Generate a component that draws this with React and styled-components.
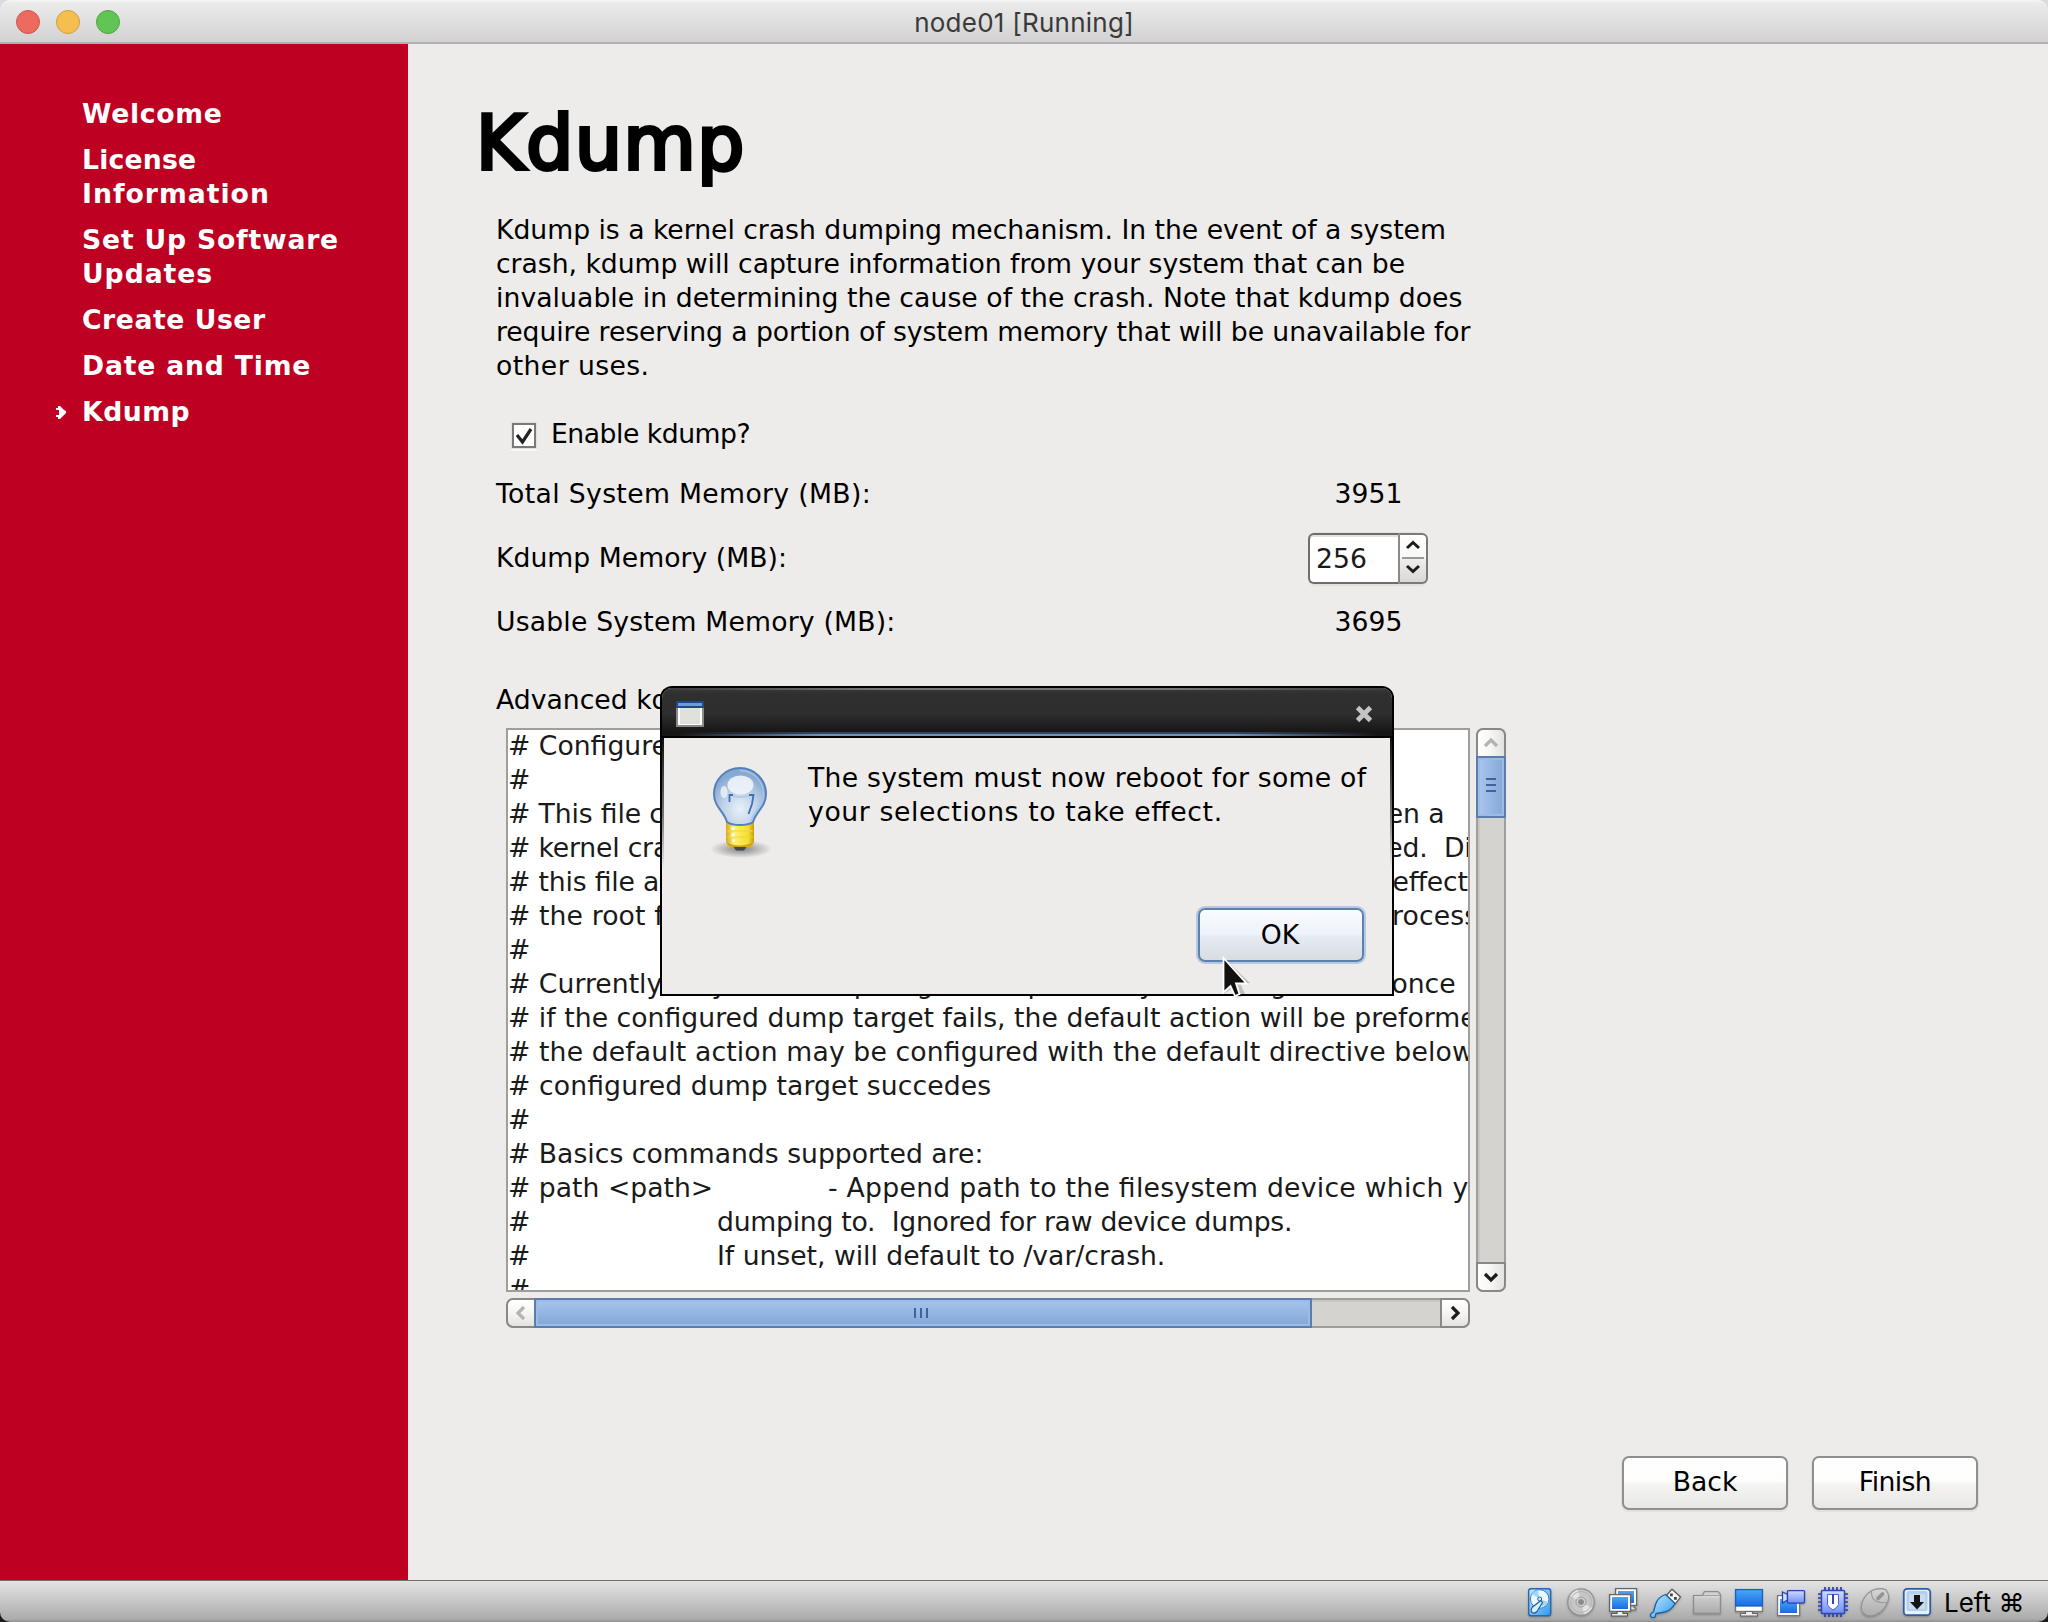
import React from 'react';
import styled, { createGlobalStyle, css } from 'styled-components';

const GlobalStyle = createGlobalStyle`
  * { box-sizing: border-box; }
  body {
    margin: 0;
    background: linear-gradient(#d9dbe0 0, #d9dbe0 50%, #1c1a1a 50%);
    font-family: "DejaVu Sans", sans-serif;
    font-size: 26.667px;
    line-height: 34px;
    color: #000;
    overflow: hidden;
  }
`;

const Window = styled.div`
  position: relative;
  width: 2048px;
  height: 1622px;
  display: flex;
  flex-direction: column;
  border-radius: 10px;
  overflow: hidden;
`;

const TitleBar = styled.header`
  height: 44px;
  flex: none;
  display: grid;
  grid-template-columns: 1fr auto 1fr;
  align-items: center;
  padding: 0 16px;
  background: linear-gradient(#f6f6f6 0, #ebebeb 3px, #d2d2d2 42px);
  border-bottom: 2px solid #b1afb0;
`;

const Lights = styled.div`
  display: flex;
  gap: 16px;
  padding-top: 2px;
`;

const Light = styled.span`
  width: 24px;
  height: 24px;
  border-radius: 50%;
  background: ${(p) => p.$fill};
  border: 1px solid ${(p) => p.$rim};
`;

const WindowTitle = styled.div`
  font-family: Inter, sans-serif;
  font-size: 26px;
  letter-spacing: 0.25px;
  color: #3a3a3a;
  padding-top: 4px;
`;

const Screen = styled.div`
  flex: 1;
  display: flex;
  min-height: 0;
`;

const Sidebar = styled.nav`
  width: 408px;
  flex: none;
  background: #be0022;
  padding: 54px 0 0 54px;
  display: flex;
  flex-direction: column;
  gap: 12px;
`;

const Step = styled.div`
  display: flex;
  color: #fff;
  font-weight: bold;
`;

const Marker = styled.div`
  width: 28px;
  height: 34px;
  flex: none;
  svg { display: block; }
`;

const Main = styled.main`
  flex: 1;
  min-width: 0;
  background: #edecea;
  padding: 54px 70px 0 88px;
  display: flex;
  flex-direction: column;
`;

const Heading = styled.h1`
  margin: 0 0 26px -20px;
  font-size: 74px;
  line-height: 90px;
  font-weight: 400;
  letter-spacing: 1.7px;
  -webkit-text-stroke: 4px #000;
`;

const Line = styled.div`
  height: 34px;
  line-height: 32px;
  white-space: pre;
  letter-spacing: ${(p) => p.$track || 0}px;
  font-feature-settings: "liga" 1;
`;

const CheckRow = styled.label`
  display: flex;
  align-items: center;
  gap: 15px;
  margin: 34px 0 26px 16px;
`;

const CheckBox = styled.span`
  width: 24px;
  height: 25px;
  margin-top: 1px;
  background: #fff;
  border: 2px solid #7d7a76;
  box-shadow: 0 0 0 1px #e2e0dd, 0 2px 0 1px #f8f7f6;
  svg { display: block; }
`;

const Field = styled.div`
  display: grid;
  grid-template-columns: 812px 120px;
  align-items: center;
  margin-bottom: ${(p) => p.$after}px;
`;

const Value = styled.div`
  height: 34px;
  line-height: 32px;
  padding-left: 1px;
  text-align: center;
`;

const Spinner = styled.div`
  height: 54px;
  display: flex;
  padding: 1px 0 2px;
  border-radius: 7px;
  background: #e3e1df;
`;

const SpinEntry = styled.div`
  flex: 1;
  background: #fff;
  border: 2px solid #6f6d6a;
  border-right-color: #8b8987;
  border-radius: 6px 0 0 6px;
  box-shadow: inset 0 2px 0 #e4e3e1;
  padding: 7px 0 0 6px;
  color: #1a1a1a;
`;

const SpinArrows = styled.div`
  width: 28px;
  border: 2px solid #7c7a78;
  border-left: 0;
  border-radius: 0 6px 6px 0;
  background: linear-gradient(#fff 0, #f7f7f6 48%, #eeedec 52%, #d9d8d6 100%);
  display: flex;
  flex-direction: column;
  align-items: center;
  svg { display: block; }
`;

const SpinRule = styled.div`
  width: 22px;
  height: 2px;
  background: #9b9997;
`;

const ConfigArea = styled.div`
  display: grid;
  grid-template-columns: 964px 30px;
  grid-template-rows: 564px 30px;
  gap: 6px;
  margin: 10px 0 128px 10px;
`;

const ConfigText = styled.div`
  overflow: hidden;
  background: #fff;
  border: 2px solid #a09e9b;
  color: #1a1a1a;
`;

const Tab = styled.span`
  display: inline-block;
  letter-spacing: 0;
  width: ${(p) => p.$width}px;
`;

const ScrollTrack = styled.div`
  display: flex;
  flex-direction: ${(p) => (p.$vertical ? 'column' : 'row')};
  background: #d5d3d0;
  border: 2px solid #a09e9b;
  ${(p) => (p.$vertical
    ? css`border-top: 0; border-bottom: 0; box-shadow: inset 2px 0 0 #c9c7c4;`
    : css`border-left: 0; border-right: 0; box-shadow: inset 0 2px 0 #c9c7c4;`)}
  border-radius: 8px;
`;

const ScrollButton = styled.div`
  flex: none;
  display: flex;
  align-items: center;
  justify-content: center;
  border: 2px solid #8a8886;
  background: linear-gradient(${(p) => p.$dir}, #fff, #f5f5f4 50%, #e3e2e0);
  border-radius: ${(p) => p.$radius};
  width: 30px;
  height: 30px;
  margin: ${(p) => p.$pull};
`;

const Thumb = styled.div`
  flex: none;
  display: flex;
  align-items: center;
  justify-content: center;
  gap: 4px;
  border: 2px solid #5b7dab;
  ${(p) => (p.$vertical
    ? css`
      width: 30px; height: 62px; margin: -2px -2px 0 -2px; padding-bottom: 4px; flex-direction: column;
      background: linear-gradient(90deg, #a9c6ed, #84a8d9);
      box-shadow: inset 0 0 0 2px #9cbce6;
    `
    : css`
      height: 30px; width: 778px; margin: -2px 0 -2px -2px; padding-right: 4px;
      background: linear-gradient(#a6c5ec, #82a6d8);
      box-shadow: inset 0 0 0 2px #9cbce6;
    `)}
`;

const Grip = styled.span`
  width: ${(p) => (p.$vertical ? 10 : 2)}px;
  height: ${(p) => (p.$vertical ? 2 : 10)}px;
  background: #3f639a;
`;

const Spring = styled.div`
  flex: 1;
`;

const Actions = styled.div`
  display: flex;
  justify-content: flex-end;
  gap: 24px;
`;

const Button = styled.button`
  width: 166px;
  height: 54px;
  padding: 0 0 2px;
  font: inherit;
  letter-spacing: ${(p) => p.$track || 0}px;
  color: #000;
  border-radius: 7px;
  ${(p) => (p.$focused
    ? css`
      border: 2px solid #5d80ac;
      padding: 0 2px 1px 0;
      background: linear-gradient(#f9fbff 0, #eef2fa 48%, #e6eaf2 54%, #d8dde2 100%);
      box-shadow: 0 0 0 2px #b5cae2;
    `
    : css`
      border: 2px solid #918f8c;
      background: linear-gradient(#fff 0, #fdfdfd 48%, #f5f5f4 50%, #e8e7e5 100%);
      box-shadow: 0 1px 0 1px #e2e0de;
    `)}
`;

const Dialog = styled.section`
  position: absolute;
  left: 660px;
  top: 686px;
  width: 734px;
  height: 310px;
  display: flex;
  flex-direction: column;
  border: 2px solid #000;
  border-radius: 12px 12px 0 0;
  background: #edecea;
  overflow: hidden;
`;

const DialogBar = styled.div`
  height: 50px;
  flex: none;
  display: flex;
  align-items: center;
  justify-content: space-between;
  padding: 3px 19px 0 14px;
  background:
    linear-gradient(90deg, #161616 2%, #34475f 22%, #34475f 78%, #161616 98%) 0 44px / 100% 2px no-repeat,
    linear-gradient(90deg, #161616 2%, #6f94c4 22%, #6f94c4 78%, #161616 98%) 0 46px / 100% 2px no-repeat,
    linear-gradient(90deg, #3a3a3a, #777 30%, #777 70%, #3a3a3a) 0 0 / 100% 2px no-repeat,
    linear-gradient(#3a3a3a 0, #2f2f2f 6px, #2e2e2e 26px, #161616 44px);
  border-bottom: 2px solid #000;
  svg { display: block; }
`;

const DialogBody = styled.div`
  flex: 1;
  padding: 24px 28px 0 33px;
  background:
    linear-gradient(#111, #777 60%, transparent) 0 0 / 2px 130px no-repeat,
    linear-gradient(#111, #777 60%, transparent) 100% 0 / 2px 130px no-repeat;
  display: grid;
  grid-template-columns: 76px minmax(0, 1fr);
  column-gap: 37px;
  grid-template-rows: 122px auto;
  svg { display: block; margin-top: 2px; }
`;

const DialogActions = styled.div`
  grid-column: 1 / -1;
  display: flex;
  justify-content: flex-end;
  padding: 24px 0 0;
`;

const Pointer = styled.svg`
  position: absolute;
  left: 1219px;
  top: 954px;
`;

const StatusBar = styled.footer`
  height: 42px;
  flex: none;
  display: flex;
  align-items: center;
  justify-content: flex-end;
  padding-right: 23px;
  border-top: 1px solid #6f6d6d;
  background: linear-gradient(#e4e4e4, #acacac 38px, #8f8f8f 41px);
`;

const Icons = styled.div`
  display: flex;
  gap: 10px;
  svg { display: block; width: 32px; height: 32px; filter: drop-shadow(0 1px 1px rgba(0, 0, 0, 0.25)); }
`;

const HostKey = styled.div`
  font-family: Inter, sans-serif;
  font-size: 26px;
  width: 81px;
  margin-left: 11px;
  padding-top: 2px;
  white-space: pre;
`;

const Chevron = ({ d, color = '#1d1d1d' }) => (
  <svg width="16" height="16" viewBox="0 0 16 16">
    <path d={d} fill="none" stroke={color} strokeWidth="3.2" />
  </svg>
);

const up = 'M2 11 L8 5 L14 11';
const down = 'M2 5 L8 11 L14 5';

const steps = [
  { lines: [['Welcome', 0.7]] },
  { lines: [['License', 0.2], ['Information', 1.0]] },
  { lines: [['Set Up Software', 0.8], ['Updates', 0.95]] },
  { lines: [['Create User', 0.55]] },
  { lines: [['Date and Time', 0.8]] },
  { lines: [['Kdump', 0.5]], current: true },
];

const intro = [
  ['Kdump is a kernel crash dumping mechanism. In the event of a system', -0.03],
  ['crash, kdump will capture information from your system that can be', -0.04],
  ['invaluable in determining the cause of the crash. Note that kdump does', 0.05],
  ['require reserving a portion of system memory that will be unavailable for', -0.08],
  ['other uses.', 0.4],
];

const config = [
  ['# Configures where to put the kdump /proc/vmcore files'],
  ['#'],
  ['# This file contains a series of commands to perform (in order) when a', -0.14],
  ['# kernel crash has happened and the kdump kernel has been loaded.  Directives in', -0.19],
  ['# this file are only applicable to the kdump initramfs, and have no effect if', -0.18],
  ['# the root filesystem is mounted and the normal init scripts are processed', 0.11],
  ['#'],
  ['# Currently only one dump target and path may be configured at once', 0.02],
  ['# if the configured dump target fails, the default action will be preformed', 0.03],
  ['# the default action may be configured with the default directive below.  If the', 0.12],
  ['# configured dump target succedes', 0.11],
  ['#'],
  ['# Basics commands supported are:'],
  ['# path <path>', 0.26, 320, '- Append path to the filesystem device which you are'],
  ['#', -0.26, 209, 'dumping to.  Ignored for raw device dumps.'],
  ['#', -0.03, 209, 'If unset, will default to /var/crash.'],
  ['#'],
];

function StatusIcons() {
  return (
    <Icons>
      <svg viewBox="0 0 32 32">
        <defs>
          <linearGradient id="blue" x1="0" y1="0" x2="0" y2="1"><stop offset="0" stopColor="#49a8fb" /><stop offset="1" stopColor="#1a6be0" /></linearGradient>
          <linearGradient id="sky" x1="0" y1="0" x2="1" y2="1"><stop offset="0" stopColor="#c3ecff" /><stop offset="1" stopColor="#2f96ee" /></linearGradient>
          <linearGradient id="grey" x1="0" y1="0" x2="0" y2="1"><stop offset="0" stopColor="#d6d6d6" /><stop offset="1" stopColor="#acacac" /></linearGradient>
          <linearGradient id="violet" x1="0" y1="0" x2="0" y2="1"><stop offset="0" stopColor="#cfdcff" /><stop offset="1" stopColor="#6f8df8" /></linearGradient>
        </defs>
        <rect x="5.700" y="2.700" width="22" height="27" rx="2.5" fill="url(#sky)" stroke="#2a66a8" strokeWidth="1.4" />
        <circle cx="16.700" cy="13" r="9.3" fill="#ecf8ff" stroke="#3d7fc0" strokeWidth="1" />
        <path d="M16.700 13 L9 8 A9 9 0 0 1 15 4 Z M16.700 13 L25 16 A9 9 0 0 1 19 21 Z" fill="#a5d5f8" />
        <circle cx="16.700" cy="13" r="2" fill="#cfeaff" stroke="#2a66a8" />
        <path d="M18 14.500 L9.500 21 Q7 24.500 9 26.500 Q11.500 28 14 25.500 L19.500 16.500 Z" fill="#d5efff" stroke="#1f5c9e" strokeWidth="1.2" />
      </svg>
      <svg viewBox="0 0 32 32">
        <circle cx="16" cy="16" r="13.2" fill="#c6c6c6" stroke="#8f8f8f" strokeWidth="1.2" />
        <path d="M16 16 L5 10 A13 13 0 0 1 13 3.5 Z M16 16 L27 22 A13 13 0 0 1 19 28.500 Z" fill="#e3e3e3" />
        <circle cx="16" cy="16" r="10.500" fill="none" stroke="#b4b4b4" />
        <circle cx="16" cy="16" r="5" fill="#cfcfcf" stroke="#9c9c9c" />
        <circle cx="16" cy="16" r="2.500" fill="#8a8a8a" stroke="#8b8b8b" />
      </svg>
      <svg viewBox="0 0 32 32">
        <rect x="8.600" y="2.600" width="21" height="16.800" fill="#fff" stroke="#666" strokeWidth="1.3" />
        <rect x="11" y="5" width="16" height="12" fill="url(#blue)" />
        <path d="M24 20 h3 v2 h2 v2 h-6" fill="#ddd" stroke="#666" />
        <rect x="2.600" y="8.600" width="21" height="16.800" fill="#fff" stroke="#666" strokeWidth="1.3" />
        <rect x="5" y="11" width="16" height="12" fill="url(#blue)" />
        <path d="M10 25.500 h6 v2 h4.500 v2.500 h-16 v-2.500 h5.500 z" fill="#eee" stroke="#555" strokeWidth="1.1" />
      </svg>
      <svg viewBox="0 0 32 32">
        <path d="M23 3.200 L31.500 11 L26 18 L17.500 9.500 Z" fill="#f4f4f4" stroke="#555" strokeWidth="1.2" strokeLinejoin="round" />
        <rect x="21" y="7.500" width="2.800" height="2.800" fill="#444" />
        <rect x="25" y="11" width="2.800" height="2.800" fill="#444" />
        <path d="M16.500 8.500 L26 17.500 Q22.500 25 13.500 26.500 L7 27.500 L6 31 Q3 32.500 1.500 30 Q1 27.500 4.500 26 L6.500 18.500 Q9 11 16.500 8.500 Z" fill="url(#sky)" stroke="#1b62a4" strokeWidth="1.3" strokeLinejoin="round" />
      </svg>
      <svg viewBox="0 0 32 32">
        <path d="M2.600 9.600 H11.500 L13.500 5.600 H27 L29.400 8.500 V27.400 H2.600 Z" fill="url(#grey)" stroke="#8d8d8d" strokeWidth="1.2" />
        <path d="M12 9.600 H29" stroke="#a2a2a2" strokeWidth="1.1" />
        <path d="M3.500 10.900 H28.500" stroke="#dedede" strokeWidth="1" />
      </svg>
      <svg viewBox="0 0 32 32">
        <rect x="2.600" y="19" width="26.800" height="6.400" fill="#fff" stroke="#777" strokeWidth="1.2" />
        <rect x="2.600" y="3.600" width="26.800" height="16.400" fill="url(#blue)" stroke="#1663bf" strokeWidth="1.3" />
        <path d="M12.500 25.500 h7 v2 h5 v2.500 h-17 v-2.500 h5 z" fill="#eee" stroke="#666" strokeWidth="1.1" />
      </svg>
      <svg viewBox="0 0 32 32">
        <rect x="2.600" y="9.600" width="22" height="20" fill="#fff" stroke="#777" strokeWidth="1.2" />
        <rect x="5" y="13" width="17" height="14" fill="url(#blue)" />
        <path d="M7.500 6 L12.500 8.500 V14 L7.500 17 Z" fill="#cfdcff" stroke="#2b41ae" strokeWidth="1.3" />
        <rect x="12.500" y="4.600" width="17" height="12.500" rx="1" fill="url(#violet)" stroke="#2b41ae" strokeWidth="1.3" />
      </svg>
      <svg viewBox="0 0 32 32">
        <path d="M8 1 V31 M12 1 V31 M16 1 V31 M20 1 V31 M24 1 V31 M1 8 H31 M1 12 H31 M1 16 H31 M1 20 H31 M1 24 H31" stroke="#2a3da9" strokeWidth="1.7" />
        <rect x="4.500" y="4.500" width="23" height="23" rx="1" fill="url(#violet)" stroke="#3347b4" strokeWidth="1.5" />
        <path d="M10.500 8.500 H21.500 V18.500 Q21 21 16 24 Q11 21 10.500 18.500 Z" fill="#fff" stroke="#4f63c5" />
        <path d="M16 8 V18" stroke="#3347b4" strokeWidth="2" />
      </svg>
      <svg viewBox="0 0 32 32">
        <path d="M13 4.500 Q21 1 27 4 Q31 9 29 15 Q25 26 16 29 Q8 31.500 4 27 Q0 20 5.500 11.500 Q8.500 7 13 4.500 Z" fill="url(#grey)" stroke="#929292" strokeWidth="1.2" />
        <path d="M12.500 5 Q12 12 16.500 15 Q22 17.500 28.500 16.500" fill="none" stroke="#9a9a9a" strokeWidth="1.1" />
        <path d="M19 12.500 L23.500 8" stroke="#929292" strokeWidth="3.600" strokeLinecap="round" />
      </svg>
      <svg viewBox="0 0 32 32">
        <rect x="2.800" y="2.800" width="26.400" height="26.400" rx="3.500" fill="#e6f1fb" stroke="#2a5ea6" strokeWidth="1.7" />
        <rect x="5.500" y="5" width="21" height="20" rx="2" fill="#b4cfea" />
        <rect x="8" y="8" width="16" height="15" rx="1" fill="#c7dcf0" />
        <path d="M13 9 H19 V16 H23 L16 23.500 L9 16 H13 Z" fill="#141414" />
      </svg>
    </Icons>
  );
}

function Bulb() {
  return (
    <svg width="76" height="100" viewBox="0 0 76 100">
      <defs>
        <radialGradient id="shade"><stop offset="0" stopColor="#000" stopOpacity=".45" /><stop offset="1" stopColor="#000" stopOpacity="0" /></radialGradient>
        <radialGradient id="glass" cx=".5" cy=".72" r=".62"><stop offset="0" stopColor="#e9f1f9" /><stop offset=".55" stopColor="#bdd1e8" /><stop offset="1" stopColor="#86a9d3" /></radialGradient>
        <linearGradient id="brass"><stop offset="0" stopColor="#d6a916" /><stop offset=".28" stopColor="#fff27c" /><stop offset=".5" stopColor="#fce94f" /><stop offset=".8" stopColor="#f4dc35" /><stop offset="1" stopColor="#c99b06" /></linearGradient>
      </defs>
      <ellipse cx="46" cy="85" rx="31" ry="9" fill="url(#shade)" />
      <path d="M38 82 h14 l-3 4.500 h-8 z" fill="#444a4c" />
      <path d="M31 57 H59 V77 Q58 83 51 83 H39 Q32 83 31 77 Z" fill="url(#brass)" />
      <path d="M31 78 Q33 83 39 83 H51 Q57 83 59 78 Q51 81.500 45 81.500 Q37 81.500 31 78 Z" fill="#d2a40a" />
      <path d="M32 67 H58 M32 73 H58" stroke="#f0d832" strokeWidth="1" />
      <path d="M36 63 h4 v3 h-4 z M36 69.500 h4 v3 h-4 z M37 75.500 h3 v2.500 h-3 z" fill="#fffbd0" />
      <path d="M45 4 C59 4 71 15 71 30 C71 43 61 47 58 58 Q54 61 45 61 Q36 61 32 58 C29 47 19 43 19 30 C19 15 31 4 45 4 Z" fill="url(#glass)" stroke="#5680bd" strokeWidth="2" />
      <path d="M45 6.500 C58 6.500 68.500 17 68.500 30 C68.500 42 59 46 56 57" fill="none" stroke="#a8c3e3" strokeWidth="1.300" />
      <ellipse cx="45.500" cy="21" rx="13" ry="9.500" fill="#eef3f9" opacity=".92" />
      <ellipse cx="29" cy="28" rx="3.600" ry="6" fill="#e6eef7" opacity=".9" />
      <path d="M34.500 38 V31 H38 M54 31 H58.500 L57 40 L53.500 50" fill="none" stroke="#4070b0" strokeWidth="1.8" />
      <path d="M38 32 Q46 34 54 32" fill="none" stroke="#b6cbe4" strokeWidth="2" />
    </svg>
  );
}

function Grips({ vertical }) {
  return [0, 1, 2].map((i) => <Grip key={i} $vertical={vertical} />);
}

export default function App() {
  return (
    <Window>
      <GlobalStyle />
      <TitleBar>
        <Lights>
          <Light $fill="#ed6a5e" $rim="#d0574c" />
          <Light $fill="#f5bf50" $rim="#d49d3c" />
          <Light $fill="#61c555" $rim="#4ea73f" />
        </Lights>
        <WindowTitle>node01 [Running]</WindowTitle>
      </TitleBar>

      <Screen>
        <Sidebar>
          {steps.map((step) => (
            <Step key={step.lines[0][0]}>
              <Marker>
                {step.current && (
                  <svg width="14" height="34" viewBox="0 0 14 34">
                    <path d="M2 12 H4 V10 H6 L8 12 L10 14 L12 15 V17 L8 21 L6 23 H4 V21 H2 V19 H5 V14 H2 Z" fill="#fff" />
                  </svg>
                )}
              </Marker>
              <div>
                {step.lines.map(([text, track]) => <Line key={text} $track={track}>{text}</Line>)}
              </div>
            </Step>
          ))}
        </Sidebar>

        <Main>
          <Heading>Kdump</Heading>
          {intro.map(([text, track]) => <Line key={text} $track={track}>{text}</Line>)}

          <CheckRow>
            <CheckBox>
              <svg width="20" height="21" viewBox="0 0 20 21">
                <path d="M3 10 L8.500 17 L17 4" fill="none" stroke="#222" strokeWidth="3.2" />
              </svg>
            </CheckBox>
            <Line $track={-0.5}>Enable kdump?</Line>
          </CheckRow>

          <Field $after={20}>
            <Line $track={0.34}>Total System Memory (MB):</Line>
            <Value>3951</Value>
          </Field>
          <Field $after={20}>
            <Line $track={0.02}>Kdump Memory (MB):</Line>
            <Spinner>
              <SpinEntry>256</SpinEntry>
              <SpinArrows>
                <svg width="16" height="22" viewBox="0 0 16 22"><path d="M2 13 L8 7.500 L14 13" fill="none" stroke="#1d1d1d" strokeWidth="3" /></svg>
                <SpinRule />
                <svg width="16" height="22" viewBox="0 0 16 22"><path d="M2 7 L8 12.500 L14 7" fill="none" stroke="#1d1d1d" strokeWidth="3" /></svg>
              </SpinArrows>
            </Spinner>
          </Field>
          <Field $after={44}>
            <Line $track={0.18}>Usable System Memory (MB):</Line>
            <Value>3695</Value>
          </Field>

          <Line>Advanced kdump configuration</Line>
          <ConfigArea>
            <ConfigText>
              {config.map(([text, track, tab, rest], i) => (
                <Line key={i} $track={track}>
                  {tab ? <Tab $width={tab}>{text}</Tab> : text}
                  {rest}
                </Line>
              ))}
            </ConfigText>
            <ScrollTrack $vertical>
              <ScrollButton $dir="90deg" $radius="7px 7px 0 0" $pull="0 -2px"><Chevron d={up} color="#b5b3b1" /></ScrollButton>
              <Thumb $vertical><Grips vertical /></Thumb>
              <Spring />
              <ScrollButton $dir="90deg" $radius="0 0 7px 7px" $pull="0 -2px"><Chevron d={down} /></ScrollButton>
            </ScrollTrack>
            <ScrollTrack>
              <ScrollButton $dir="180deg" $radius="7px 0 0 7px" $pull="-2px 0"><Chevron d="M11 2 L5 8 L11 14" color="#b5b3b1" /></ScrollButton>
              <Thumb><Grips /></Thumb>
              <Spring />
              <ScrollButton $dir="180deg" $radius="0 7px 7px 0" $pull="-2px 0"><Chevron d="M5 2 L11 8 L5 14" /></ScrollButton>
            </ScrollTrack>
          </ConfigArea>

          <Actions>
            <Button>Back</Button>
            <Button $track={-0.6}>Finish</Button>
          </Actions>
        </Main>
      </Screen>

      <StatusBar>
        <StatusIcons />
        <HostKey>Left ⌘</HostKey>
      </StatusBar>

      <Dialog>
        <DialogBar>
          <svg width="28" height="26" viewBox="0 0 28 26">
            <rect x="1" y="1" width="26" height="24" fill="#fff" stroke="#8a8a86" strokeWidth="2" />
            <rect x="4" y="6" width="20" height="17" fill="#dfe1dc" />
            <rect x="0" y="0" width="28" height="7" fill="#204a87" />
            <rect x="2" y="2" width="24" height="3" fill="#6d9bd3" />
          </svg>
          <svg width="18" height="18" viewBox="0 0 18 18">
            <path d="M2.500 2.500 L15.500 15.500 M15.500 2.500 L2.500 15.500" stroke="#c4c4c4" strokeWidth="4.800" />
          </svg>
        </DialogBar>
        <DialogBody>
          <Bulb />
          <div>
            <Line $track={0.24}>The system must now reboot for some of</Line>
            <Line $track={0.6}>your selections to take effect.</Line>
          </div>
          <DialogActions>
            <Button $focused>OK</Button>
          </DialogActions>
        </DialogBody>
      </Dialog>

      <Pointer width="36" height="46" viewBox="0 0 36 46">
        <path d="M5 4 L31 29 L21.500 30 L26.500 41 L18 44 L13.500 34 L5 40 Z" fill="#000" opacity=".18" />
        <path d="M4.500 4 V38.500 L11.500 32 L16 42 L20.500 40 L17 29.500 H27.500 Z" fill="#111" stroke="#fff" strokeWidth="1.8" />
      </Pointer>
    </Window>
  );
}
